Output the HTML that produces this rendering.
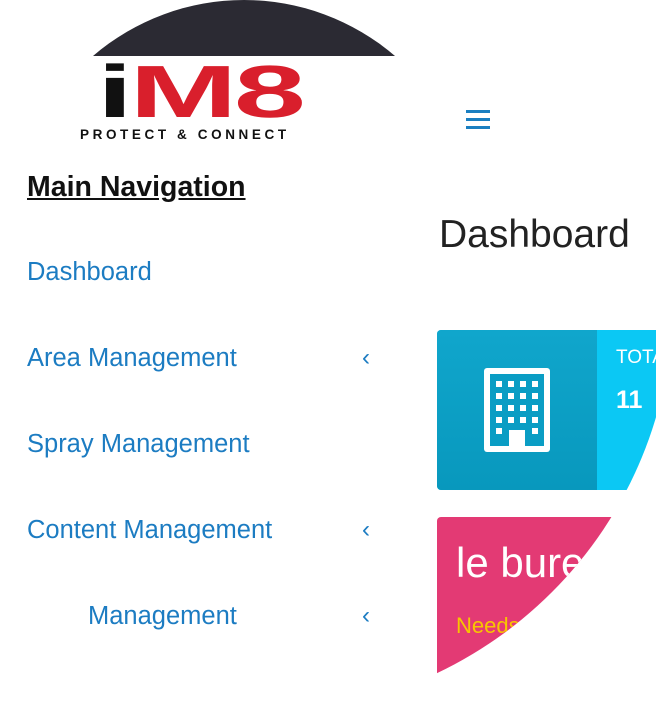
<!DOCTYPE html>
<html><head><style>
*{margin:0;padding:0;box-sizing:border-box}
body{width:656px;height:699px;background:#fff;position:relative;overflow:hidden;font-family:"Liberation Sans",sans-serif}
.a{position:absolute;white-space:nowrap}
.nav{color:#1c7cc2;font-size:25.5px;left:27px}
.chev{color:#1c7cc2;font-size:24px;left:362px}
#clip{position:absolute;left:0;top:0;width:656px;height:699px;clip-path:circle(413px at 260px 300px)}
</style></head><body>
<svg class="a" style="left:0;top:0" width="656" height="60"><path d="M93 56 A231.6 231.6 0 0 1 395 56 Z" fill="#2b2a33"/></svg>
<div class="a" style="left:97px;top:52px;font-size:74px;font-weight:bold;letter-spacing:-2px;line-height:80px;transform:scaleX(1.75);transform-origin:0 0"><span style="color:#111">i</span><span style="color:#d91f2c">M8</span></div>
<div class="a" style="left:80px;top:127px;font-size:13.5px;font-weight:bold;color:#111;letter-spacing:3.6px">PROTECT &amp; CONNECT</div>
<div class="a" style="left:466px;top:110px;width:24px;height:20px">
<div style="height:3px;background:#1a7fc1;margin-bottom:5px"></div><div style="height:3px;background:#1a7fc1;margin-bottom:5px"></div><div style="height:3px;background:#1a7fc1"></div></div>
<div class="a" style="left:27px;top:171px;font-size:28.5px;font-weight:bold;color:#111;text-decoration:underline">Main Navigation</div>
<div class="a nav" style="top:258px">Dashboard</div>
<div class="a nav" style="top:344px">Area Management</div>
<div class="a nav" style="top:430px">Spray Management</div>
<div class="a nav" style="top:516px">Content Management</div>
<div class="a nav" style="top:602px;left:88px">Management</div>
<div class="a chev" style="top:344px">‹</div>
<div class="a chev" style="top:516px">‹</div>
<div class="a chev" style="top:602px">‹</div>
<div class="a" style="left:439px;top:213px;font-size:39px;color:#222">Dashboard</div>
<div id="clip">
<div class="a" style="left:437px;top:330px;width:260px;height:160px;border-radius:4px;overflow:hidden;background:#0bc8f4">
<div style="position:absolute;left:0;top:0;width:160px;height:160px;background:linear-gradient(#10a6cc,#0898bd)"></div>
<svg style="position:absolute;left:47px;top:38px" width="66" height="84" viewBox="0 0 66 84">
<rect x="0" y="0" width="66" height="84" rx="3" fill="#fff"/><rect x="6" y="6" width="54" height="72" fill="#0a9dc4"/>
<g fill="#fff"><rect x="12" y="13" width="6" height="6"/><rect x="24" y="13" width="6" height="6"/><rect x="36" y="13" width="6" height="6"/><rect x="48" y="13" width="6" height="6"/>
<rect x="12" y="25" width="6" height="6"/><rect x="24" y="25" width="6" height="6"/><rect x="36" y="25" width="6" height="6"/><rect x="48" y="25" width="6" height="6"/>
<rect x="12" y="37" width="6" height="6"/><rect x="24" y="37" width="6" height="6"/><rect x="36" y="37" width="6" height="6"/><rect x="48" y="37" width="6" height="6"/>
<rect x="12" y="49" width="6" height="6"/><rect x="24" y="49" width="6" height="6"/><rect x="36" y="49" width="6" height="6"/><rect x="48" y="49" width="6" height="6"/>
<rect x="12" y="60" width="6" height="6"/><rect x="48" y="60" width="6" height="6"/><rect x="25" y="62" width="16" height="16"/></g></svg>
<div style="position:absolute;left:179px;top:17px;color:#fff;font-size:19px">TOTAL</div>
<div style="position:absolute;left:179px;top:56px;color:#fff;font-size:25px;font-weight:bold">11</div>
</div>
<div class="a" style="left:437px;top:517px;width:260px;height:200px;border-radius:4px;background:#e33a74">
<div style="position:absolute;left:19px;top:22px;color:#fff;font-size:42px">le bureau</div>
<div style="position:absolute;left:19px;top:96px;color:#f7c600;font-size:22px">Needs</div>
</div>
</div>
</body></html>
